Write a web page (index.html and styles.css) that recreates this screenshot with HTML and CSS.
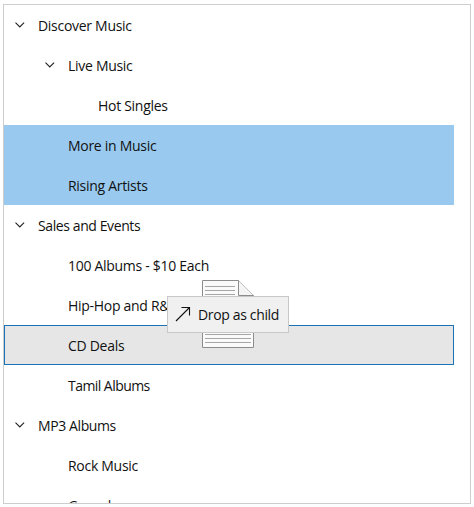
FILE: index.html
```html
<!DOCTYPE html>
<html lang="en">
<head>
<meta charset="utf-8">
<title>Music</title>
<link rel="stylesheet" href="styles.css">
</head>
<body>
<svg class="defs" width="0" height="0"><symbol id="chevron" viewBox="0 0 10 6"><path d="M.5 .6L4.8 4.9L9.1 .6" fill="none" stroke="#222" stroke-width="1.1"/></symbol></svg>
<main class="tree">
  <div class="row"><svg class="chevron"><use href="#chevron"/></svg><span class="label">Discover Music</span></div>
  <div class="row level-1"><svg class="chevron"><use href="#chevron"/></svg><span class="label">Live Music</span></div>
  <div class="row level-2"><span class="label">Hot Singles</span></div>
  <div class="row level-1 selected"><span class="label">More in Music</span></div>
  <div class="row level-1 selected"><span class="label">Rising Artists</span></div>
  <div class="row"><svg class="chevron"><use href="#chevron"/></svg><span class="label tight">Sales and Events</span></div>
  <div class="row level-1"><span class="label">100 Albums - $10 Each</span></div>
  <div class="row level-1"><span class="label">Hip-Hop and R&amp;B</span></div>
  <div class="row level-1 target"><span class="label">CD Deals</span></div>
  <div class="row level-1"><span class="label tighter">Tamil Albums</span></div>
  <div class="row"><svg class="chevron"><use href="#chevron"/></svg><span class="label tight">MP3 Albums</span></div>
  <div class="row level-1"><span class="label">Rock Music</span></div>
  <div class="row level-1"><span class="label tight">Gospel</span></div>
</main>
<svg class="document" width="53" height="69" viewBox="0 0 53 69">
  <path d="M.5 .5H36.5L51.5 15.5V67.5H.5Z" fill="#fafafa" stroke="#8c8c8c"/>
  <path d="M36.5 .5V15.5H51.5" fill="#f4f4f4" stroke="#8c8c8c"/>
  <path d="M3 6.5H33M3 10.5H33M3 14.5H33M3 54.5H49M3 58.5H49M3 62.5H49" stroke="#a6a6a6"/>
</svg>
<div class="drop-tip">
  <svg class="arrow" width="16" height="16" viewBox="0 0 16 16"><path d="M1 15L14.5 1.5M6.5 1.5H14.5V9.5" fill="none" stroke="#111" stroke-width="1.1"/></svg>
  <span class="label">Drop as child</span>
</div>
</body>
</html>
```
FILE: styles.css
```css
* { box-sizing: border-box; }
body {
  margin: 0;
  padding: 4px 3px;
  height: 507px;
  overflow: hidden;
  background: #fff;
  color: #111;
  font: 14px/20px "Open Sans", "Noto Sans", sans-serif;
}
.defs { position: absolute; }
.tree {
  width: 468px;
  height: 500px;
  border: 1px solid #cdcdcd;
  overflow: hidden;
}
.row {
  display: flex;
  align-items: center;
  width: 450px;
  height: 40px;
  padding-left: 34px;
}
.level-1 { padding-left: 64px; }
.level-2 { padding-left: 94px; }
.selected { background: #99c9ef; }
.target {
  padding-left: 63px;
  background: #e6e6e6;
  border: 1px solid #1a73b5;
}
.chevron {
  width: 10px;
  height: 6px;
  margin: -1px 13px 0 -23px;
}
.label {
  white-space: nowrap;
  letter-spacing: -0.29px;
  padding-top: 2px;
}
.tight { letter-spacing: -0.4px; }
.tighter { letter-spacing: -0.55px; }
.document {
  position: absolute;
  left: 202px;
  top: 280px;
}
.drop-tip {
  position: absolute;
  left: 167px;
  top: 296px;
  width: 122px;
  height: 37px;
  display: flex;
  align-items: center;
  padding-left: 7px;
  gap: 7px;
  background: #f0f0f0;
  border: 1px solid #c8c8c8;
}
.drop-tip .label {
  padding-top: 0;
  letter-spacing: -0.35px;
}
.arrow { margin-top: -1px; }
```
